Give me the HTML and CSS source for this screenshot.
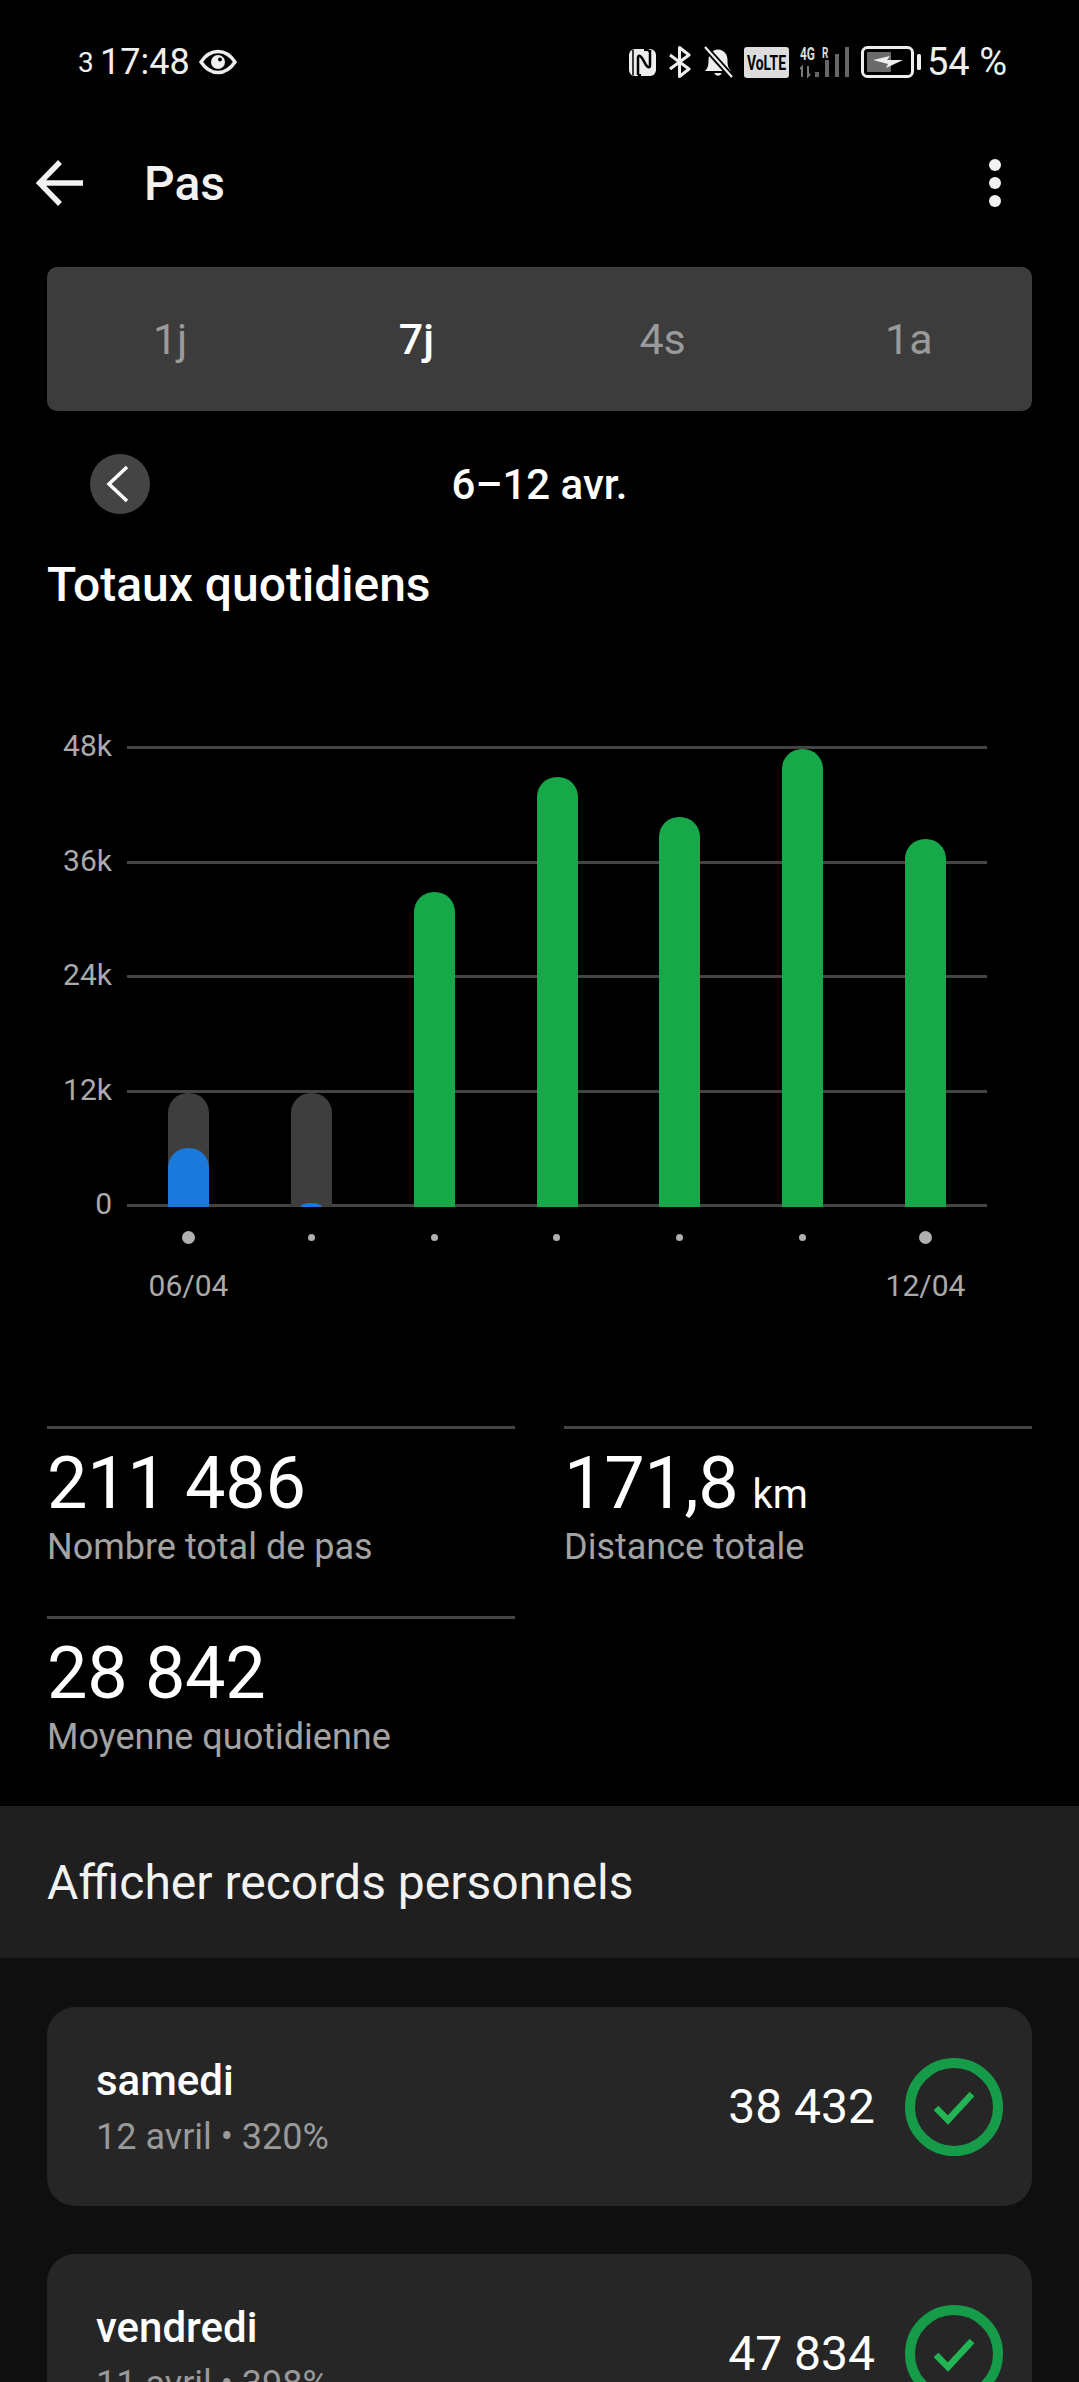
FILE: index.html
```html
<!DOCTYPE html>
<html lang="fr">

<head>
  <meta charset="UTF-8" />
  <meta name="viewport" content="width=device-width, initial-scale=1.0" />
  <title>Pas</title>
  <link rel="stylesheet" href="styles.css">
</head>

<body>
  <div class="phone">
    <div class="statusbar">
      <div class="status-left">
        <span class="status-sup">3</span>
        <span class="status-time">17:48</span>
        <svg class="icon-eye" width="38" height="26" viewBox="0 0 38 26">
          <path d="M2 13C7 5.500 12.500 2.500 19 2.500S31 5.500 36 13C31 20.500 25.500 23.500 19 23.500S7 20.500 2 13Z" fill="none" stroke="#eee" stroke-width="3.400" />
          <circle cx="19" cy="13" r="7" fill="#eee" />
          <circle cx="21" cy="10.500" r="2" fill="#000" />
        </svg>
      </div>
      <div class="status-right">
        <svg width="29" height="29" viewBox="0 0 29 29">
          <rect x="1" y="1" width="27" height="27" rx="6" fill="#eee" />
          <path d="M5 2V27" stroke="#000" stroke-width="1.500" />
          <path d="M10 27V10C10 7 12 7 14 10L18 17C20 20 22 20 22 17V2" fill="none" stroke="#000" stroke-width="2.500" />
          <path d="M16 2H19C22 2 22 5 22 5M13 27H10" fill="none" stroke="#000" stroke-width="2" />
        </svg>
        <svg width="24" height="32" viewBox="0 0 24 32">
          <path d="M2 9L21 23L11.500 30.500V1.500L21 9L2 23" fill="none" stroke="#eee" stroke-width="3" stroke-linejoin="round" />
        </svg>
        <svg width="30" height="33" viewBox="0 0 30 33">
          <path d="M2 25C5 22 5.500 19 5.500 14C5.500 8 9 4 15 3.500C21 4 24.500 8 24.500 14C24.500 19 25 22 28 25Z" fill="#eee" />
          <path d="M11.500 27H18.500C18 30.500 12 30.500 11.500 27Z" fill="#eee" />
          <path d="M1 0L29 31" stroke="#000" stroke-width="6" />
          <path d="M2 1L29 31" stroke="#eee" stroke-width="2.200" />
        </svg>
        <svg width="45" height="31" viewBox="0 0 45 31">
          <rect width="45" height="31" rx="3" fill="#ddd" />
          <text class="volte-text" transform="translate(22.500 23) scale(0.66 1)" text-anchor="middle">VoLTE</text>
        </svg>
        <svg class="icon-signal" width="50" height="40" viewBox="0 -4 50 40">
          <text class="net-text" transform="translate(0 14) scale(0.66 1)">4G</text>
          <text class="net-text small" transform="translate(22 12) scale(0.66 1)">R</text>
          <path d="M2 31V21L0 23M8 20V30L10 28" fill="none" stroke="#777" stroke-width="2" />
          <rect x="15" y="26" width="4" height="5" fill="#666" />
          <rect x="25" y="14" width="4" height="17" fill="#666" />
          <rect x="35" y="8" width="4" height="23" fill="#666" />
          <rect x="45" y="1" width="4" height="30" fill="#666" />
        </svg>
        <svg class="icon-battery" width="60" height="32" viewBox="0 0 60 32">
          <rect x="1.500" y="1.500" width="50" height="29" rx="5" fill="none" stroke="#eee" stroke-width="3" />
          <rect x="6" y="6" width="24" height="20" rx="1" fill="#6a6a6a" />
          <path d="M12 14L29 10L26 14H42L25 22L27 18Z" fill="#eee" />
          <rect x="56" y="8" width="4" height="16" rx="1.500" fill="#eee" />
        </svg>
        <span class="status-battery">54 %</span>
      </div>
    </div>

    <div class="topbar">
      <svg class="back-arrow" width="48" height="48" viewBox="0 0 48 48">
        <path d="M47 24H4M24 3L3.500 24L24 45" fill="none" stroke="#f2f2f2" stroke-width="5.500" />
      </svg>
      <h1 class="topbar-title">Pas</h1>
      <div class="more">
        <span></span>
        <span></span>
        <span></span>
      </div>
    </div>

    <ul class="tabs">
      <li>1j</li>
      <li class="active">7j</li>
      <li>4s</li>
      <li>1a</li>
    </ul>

    <div class="date-row">
      <button class="date-prev">
        <svg width="24" height="38" viewBox="0 0 24 38">
          <path d="M21 2L3 19L21 36" fill="none" stroke="#fff" stroke-width="3.500" />
        </svg>
      </button>
      <span class="date-label">6–12 avr.</span>
    </div>

    <h2 class="chart-title">Totaux quotidiens</h2>

    <div class="chart">
      <div class="y-axis">
        <span>48k</span>
        <span>36k</span>
        <span>24k</span>
        <span>12k</span>
        <span>0</span>
      </div>
      <div class="plot">
        <div class="grid-lines">
          <i></i>
          <i></i>
          <i></i>
          <i></i>
          <i></i>
        </div>
        <div class="bars">
          <div class="bar-col">
            <div class="bar track" style="height: 114px">
              <div class="bar blue" style="height: 59px"></div>
            </div>
          </div>
          <div class="bar-col">
            <div class="bar track" style="height: 114px">
              <div class="bar blue tiny" style="height: 4px"></div>
            </div>
          </div>
          <div class="bar-col">
            <div class="bar green" style="height: 315px"></div>
          </div>
          <div class="bar-col">
            <div class="bar green" style="height: 430px"></div>
          </div>
          <div class="bar-col">
            <div class="bar green" style="height: 390px"></div>
          </div>
          <div class="bar-col">
            <div class="bar green" style="height: 458px"></div>
          </div>
          <div class="bar-col">
            <div class="bar green" style="height: 368px"></div>
          </div>
        </div>
      </div>
    </div>

    <div class="chart-dots">
      <i class="big"></i>
      <i></i>
      <i></i>
      <i></i>
      <i></i>
      <i></i>
      <i class="big"></i>
    </div>
    <div class="chart-dates">
      <span>06/04</span>
      <span>12/04</span>
    </div>

    <div class="stats">
      <div class="stat">
        <div class="stat-value">211 486</div>
        <div class="stat-label">Nombre total de pas</div>
      </div>
      <div class="stat">
        <div class="stat-value">171,8<small>km</small></div>
        <div class="stat-label">Distance totale</div>
      </div>
      <div class="stat">
        <div class="stat-value">28 842</div>
        <div class="stat-label">Moyenne quotidienne</div>
      </div>
    </div>

    <div class="records-head">Afficher records personnels</div>

    <div class="records">
      <div class="record">
        <div class="record-text">
          <div class="record-day">samedi</div>
          <div class="record-sub">12 avril • 320%</div>
        </div>
        <div class="record-value">38 432</div>
        <svg class="record-check" width="98" height="98" viewBox="0 0 98 98">
          <circle cx="49" cy="49" r="44" fill="none" stroke="#169c48" stroke-width="10" />
          <path d="M31 50L43 62L67 36" fill="none" stroke="#22b455" stroke-width="6.500" />
        </svg>
      </div>
      <div class="record">
        <div class="record-text">
          <div class="record-day">vendredi</div>
          <div class="record-sub">11 avril • 398%</div>
        </div>
        <div class="record-value">47 834</div>
        <svg class="record-check" width="98" height="98" viewBox="0 0 98 98">
          <circle cx="49" cy="49" r="44" fill="none" stroke="#169c48" stroke-width="10" />
          <path d="M31 50L43 62L67 36" fill="none" stroke="#22b455" stroke-width="6.500" />
        </svg>
      </div>
    </div>
  </div>
</body>

</html>
```

FILE: styles.css
```css
* {
  box-sizing: border-box;
}

body {
  margin: 0;
  background: #000;
  color: #fff;
  font-family: Roboto, "Noto Sans", sans-serif;
}

.phone {
  width: 1079px;
  height: 2382px;
  overflow: hidden;
}

/* status bar */
.statusbar {
  height: 124px;
  padding: 0 72px 0 78px;
  display: flex;
  align-items: center;
  justify-content: space-between;
  color: #eee;
}

.status-left {
  display: flex;
  align-items: center;
}

.status-sup {
  font-size: 28px;
  width: 22px;
}

.status-time {
  font-size: 36px;
}

.icon-eye {
  margin-left: 9px;
}

.status-right {
  display: flex;
  align-items: center;
  gap: 11px;
}

.volte-text {
  font-size: 21px;
  font-weight: 700;
  fill: #000;
}

.net-text {
  font-size: 18px;
  font-weight: 700;
  fill: #ddd;
}

.net-text.small {
  font-size: 15px;
}

.status-battery {
  font-size: 38px;
  margin-left: -5px;
}

/* top bar */
.topbar {
  height: 118px;
  padding: 0 78px 0 36px;
  display: flex;
  align-items: center;
}

.topbar-title {
  margin: 0 0 0 60px;
  font-size: 48px;
  font-weight: 500;
  flex: 1;
  color: #f2f2f2;
}

.more {
  display: flex;
  flex-direction: column;
  gap: 6px;
}

.more span {
  width: 12px;
  height: 12px;
  border-radius: 50%;
  background: #f2f2f2;
}

/* period tabs */
.tabs {
  margin: 25px 47px 0;
  padding: 0;
  height: 144px;
  list-style: none;
  display: grid;
  grid-template-columns: repeat(4, 1fr);
  align-items: center;
  background: #3c3c3c;
  border-radius: 10px;
  font-size: 43px;
  color: #9a9a9a;
  text-align: center;
}

.tabs li.active {
  color: #fff;
  font-weight: 500;
}

/* date row */
.date-row {
  margin: 43px 47px 0;
  height: 60px;
  display: flex;
  align-items: center;
  justify-content: center;
  position: relative;
}

.date-prev {
  position: absolute;
  left: 43px;
  top: 0;
  width: 60px;
  height: 60px;
  border: none;
  border-radius: 50%;
  padding: 0 4px 0 0;
  background: #444;
  display: flex;
  align-items: center;
  justify-content: center;
}

.date-label {
  font-size: 42px;
  font-weight: 500;
}

.chart-title {
  margin: 44px 47px 0;
  font-size: 48px;
  line-height: 54px;
  font-weight: 500;
}

/* chart */
.chart {
  margin-top: 134px;
  display: flex;
  height: 461px;
}

.y-axis {
  width: 127px;
  padding-right: 15px;
  display: flex;
  flex-direction: column;
  justify-content: space-between;
  text-align: right;
  font-size: 30px;
  color: #aaa;
}

.y-axis span {
  height: 3px;
  line-height: 0;
}

.plot {
  width: 860px;
  position: relative;
}

.grid-lines {
  height: 100%;
  display: flex;
  flex-direction: column;
  justify-content: space-between;
}

.grid-lines i {
  height: 3px;
  background: #444;
}

.bars {
  position: absolute;
  inset: 0;
  display: flex;
}

.bar-col {
  flex: 1;
  display: flex;
  justify-content: center;
  align-items: flex-end;
}

.bar {
  width: 41px;
  border-radius: 20px 20px 0 0;
}

.bar.track {
  background: #3e3e3e;
  display: flex;
  align-items: flex-end;
  overflow: hidden;
}

.bar.blue {
  background: #1b79dc;
}

.bar.tiny {
  width: 22px;
  margin: 0 auto;
  border-radius: 11px 11px 0 0 / 4px 4px 0 0;
}

.bar.green {
  background: #17a849;
}

.chart-dots {
  margin-left: 127px;
  width: 860px;
  height: 14px;
  margin-top: 23px;
  display: grid;
  grid-template-columns: repeat(7, 1fr);
  align-items: center;
  justify-items: center;
}

.chart-dots i {
  width: 7px;
  height: 7px;
  border-radius: 50%;
  background: #b0b0b0;
}

.chart-dots i.big {
  width: 13px;
  height: 13px;
}

.chart-dates {
  margin-left: 127px;
  width: 860px;
  margin-top: 25px;
  display: flex;
  justify-content: space-between;
  font-size: 30px;
  line-height: 34px;
  color: #aaa;
}

.chart-dates span {
  width: 123px;
  text-align: center;
}

/* totals */
.stats {
  margin: 123px 47px 0;
  display: grid;
  grid-template-columns: 468px 468px;
  column-gap: 49px;
  grid-auto-rows: 190px;
}

.stat {
  border-top: 3px solid #444;
  padding-top: 17px;
}

.stat-value {
  font-size: 72px;
  line-height: 76px;
  letter-spacing: -0.3px;
}

.stat-value small {
  margin-left: 14px;
  font-size: 40px;
  line-height: 0;
  letter-spacing: 0;
}

.stat-label {
  margin-top: 5px;
  font-size: 36px;
  line-height: 40px;
  color: #a3a3a3;
}

/* personal records */
.records-head {
  height: 152px;
  padding-left: 47px;
  display: flex;
  align-items: center;
  background: #1f1f1f;
  font-size: 48px;
  color: #f2f2f2;
}

.records {
  padding: 49px 47px;
  background: #0f0f0f;
  display: flex;
  flex-direction: column;
  gap: 48px;
}

.record {
  flex-shrink: 0;
  height: 199px;
  padding: 0 29px 0 49px;
  display: flex;
  align-items: center;
  background: #262626;
  border-radius: 28px;
}

.record-text {
  flex: 1;
}

.record-day {
  font-size: 42px;
  line-height: 46px;
  font-weight: 500;
}

.record-sub {
  margin-top: 14px;
  font-size: 36px;
  line-height: 38px;
  color: #999;
}

.record-value {
  font-size: 48px;
  margin-right: 30px;
}
```
